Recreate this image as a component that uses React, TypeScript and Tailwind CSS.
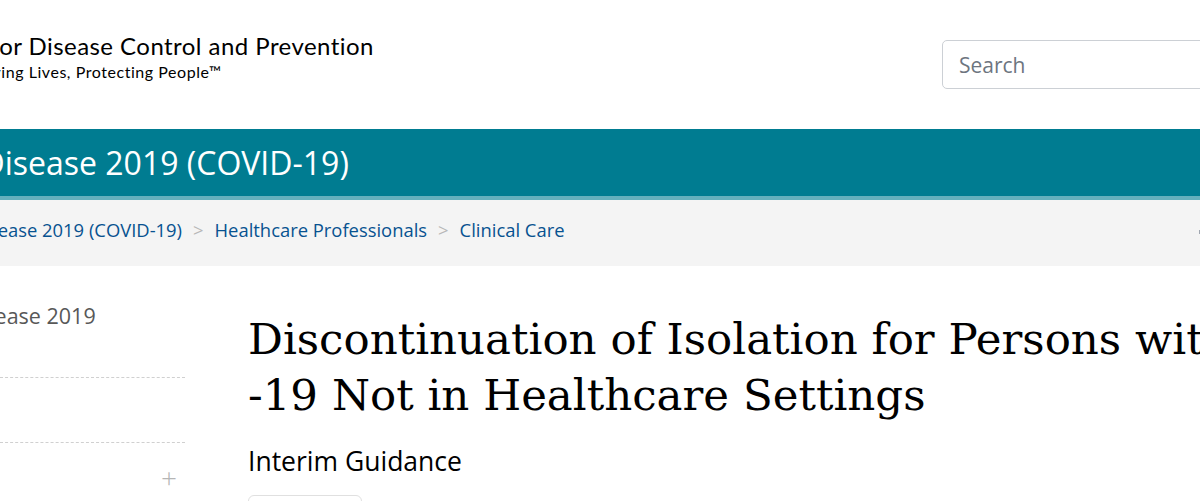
export default function App() {
  return (
    <div className="w-[1200px] h-[501px] overflow-hidden bg-white font-['Open_Sans',sans-serif]">
      {/* header */}
      <header className="flex h-[129px] items-start">
        <div className="w-[942px] shrink-0 overflow-hidden pt-[32px] whitespace-nowrap font-['Lato',sans-serif] text-black">
          <div className="-ml-[101px] text-[24px] leading-[28px] tracking-[0.45px]">Centers for Disease Control and Prevention</div>
          <div className="-ml-[25px] mt-[2px] text-[16px] leading-[20px] tracking-[0.55px]">Saving Lives, Protecting People™</div>
        </div>
        <div className="mt-[40px] w-[300px] shrink-0">
          <input
            className="h-[49px] w-full rounded-[5px] border border-[#ccd0d5] px-4 text-[21px] text-[#333] placeholder:text-[#6d7580] outline-none"
            placeholder="Search"
          />
        </div>
      </header>

      {/* teal bar */}
      <div className="flex h-[71px] items-center overflow-hidden border-b-[4px] border-[#64b0bd] bg-[#007c91]">
        <div className="-ml-[208px] whitespace-nowrap text-[32px] text-white">Coronavirus Disease 2019 (COVID-19)</div>
      </div>

      {/* breadcrumb */}
      <nav className="flex h-[66px] items-center overflow-hidden whitespace-nowrap bg-[#f4f4f4] pb-[6px] text-[18.4px]">
        <div className="-ml-[138px] flex items-center">
          <span className="text-[#075290]">Coronavirus Disease 2019 (COVID-19)</span>
          <span className="mx-[11px] text-[#b8b8b8]">&gt;</span>
          <span className="text-[#075290]">Healthcare Professionals</span>
          <span className="mx-[11px] text-[#b8b8b8]">&gt;</span>
          <span className="text-[#075290]">Clinical Care</span>
        </div>
        <div className="ml-auto mt-[4px] h-[4px] w-[1px] bg-[#a0a6b0]" />
      </nav>

      {/* body */}
      <div className="flex">
        <aside className="w-[185px] shrink-0 overflow-hidden">
          <div className="h-[111px] pt-[36px] whitespace-nowrap text-[21.5px] leading-[28px] text-[#585858]">
            <div className="-ml-[164px]">Coronavirus Disease 2019</div>
          </div>
          <div className="h-[65px] border-t border-dashed border-[#d0d0d0]" />
          <div className="relative h-[60px] border-t border-dashed border-[#d0d0d0]">
            <span className="absolute right-[8px] top-[20px] text-[28px] font-light leading-none text-[#b5b5b5]">+</span>
          </div>
        </aside>
        <main className="ml-[63px] flex-1 whitespace-nowrap">
          <h1 className="mt-[45px] font-['DejaVu_Serif',serif] text-[43.5px] leading-[56px] text-black">
            Discontinuation of Isolation for Persons with COVID
            <br />
            -19 Not in Healthcare Settings
          </h1>
          <div className="mt-[22px] text-[26.5px] leading-[32px] text-black">Interim Guidance</div>
          <div className="mt-[18px] h-[30px] w-[114px] rounded-[6px] border border-[#e0e0e0]" />
        </main>
      </div>
    </div>
  );
}
